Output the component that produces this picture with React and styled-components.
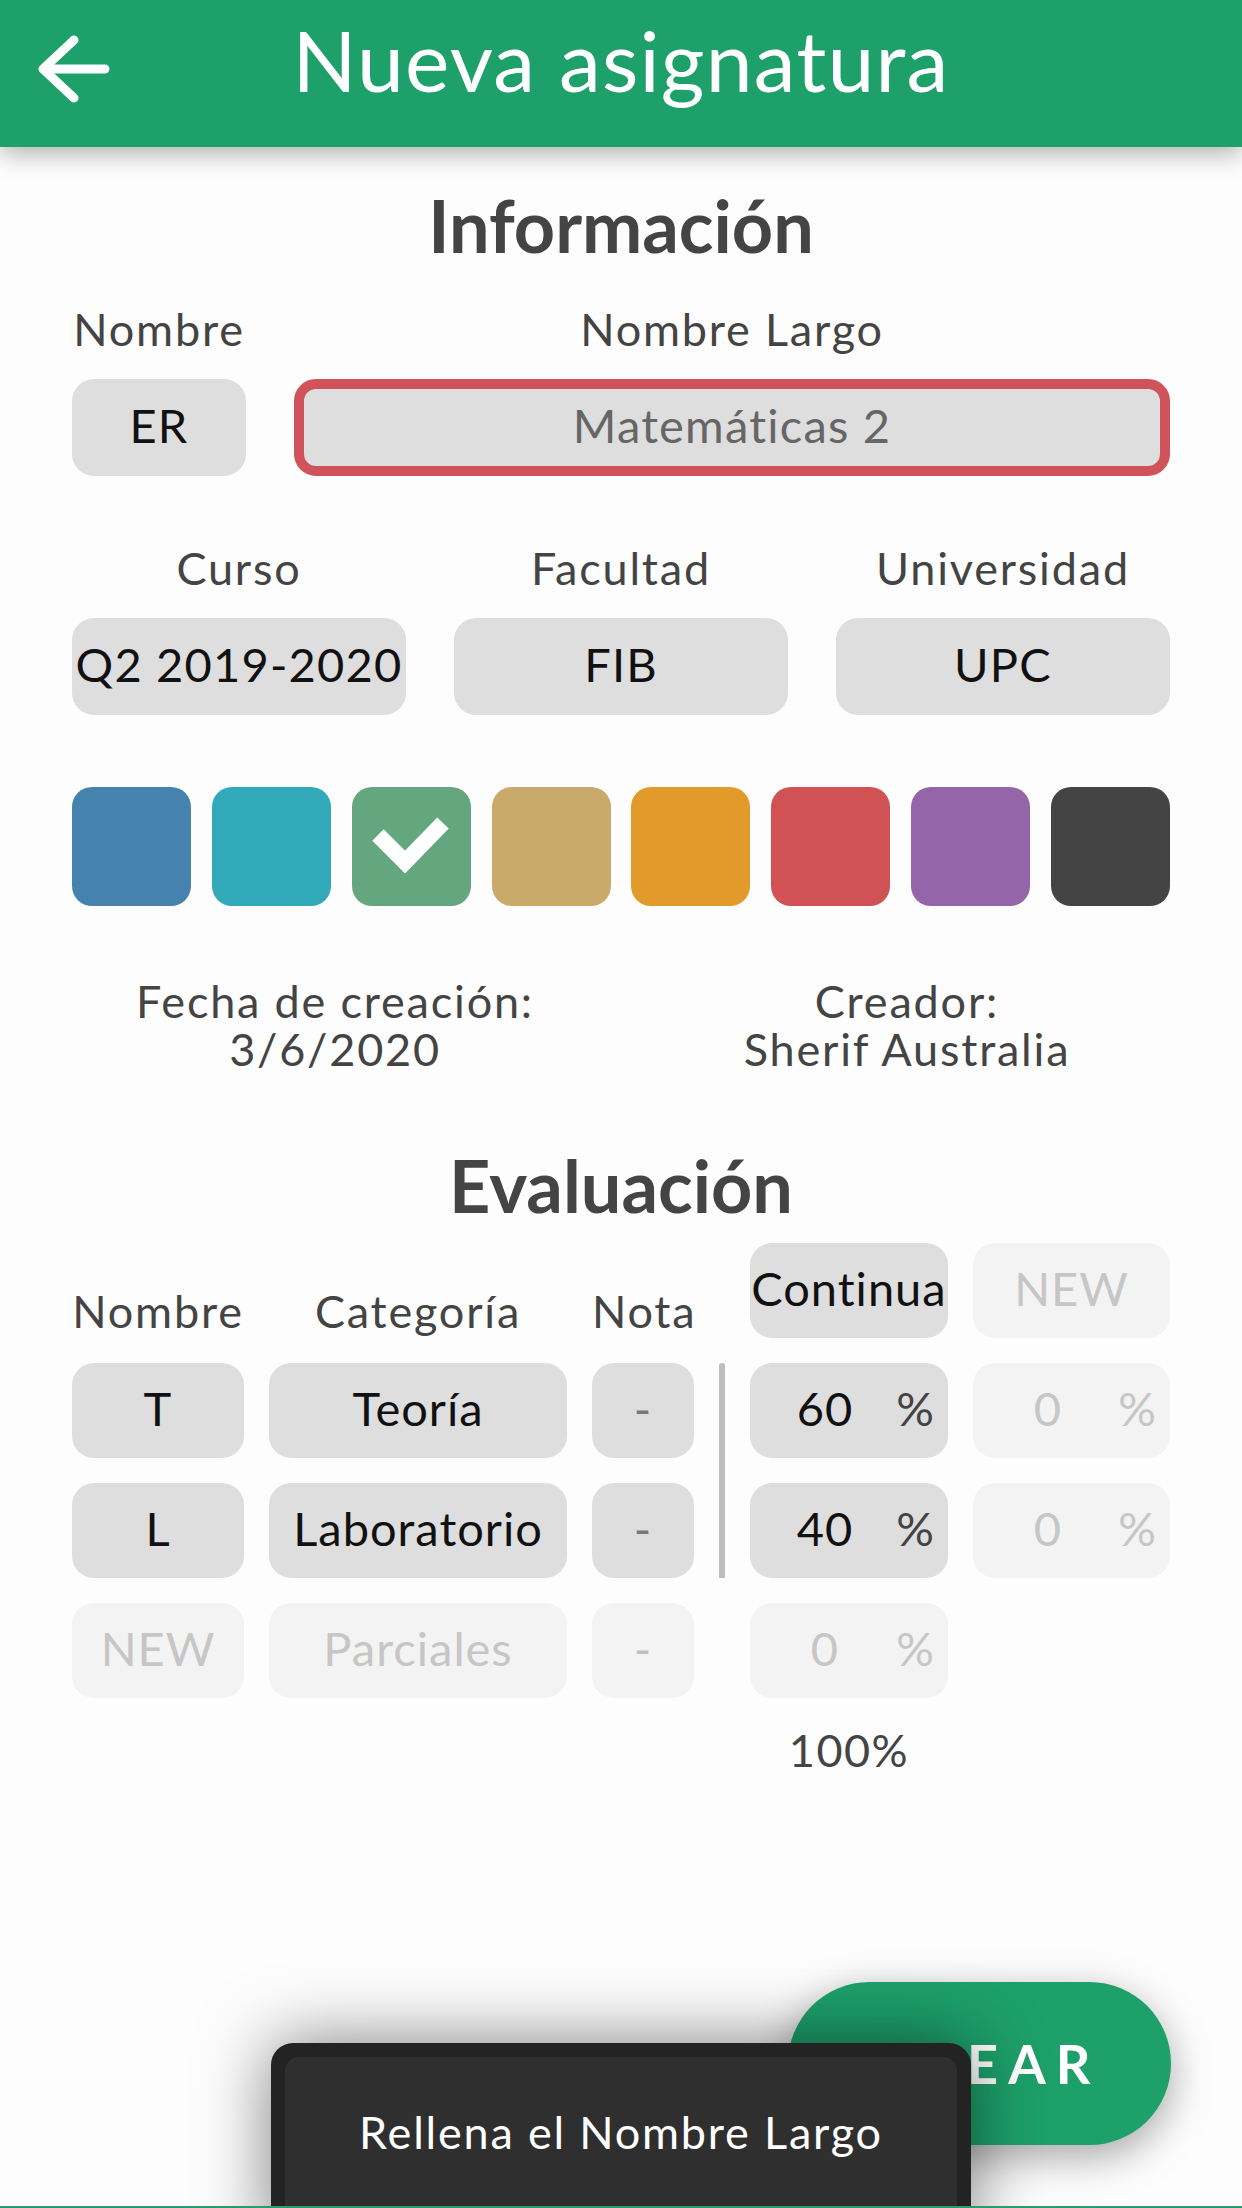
import React from "react";
import styled, { createGlobalStyle, css } from "styled-components";

const GlobalStyle = createGlobalStyle`
  html, body { margin: 0; padding: 0; background: #fdfdfd; }
  body {
    font-family: Lato, "Noto Sans", sans-serif;
    width: 1242px;
    height: 2208px;
    overflow: hidden;
    -webkit-font-smoothing: antialiased;
  }
  * { box-sizing: border-box; }
`;

const Page = styled.div`
  position: relative;
  width: 1242px;
  height: 2208px;
  background: #fdfdfd;
`;

const Header = styled.header`
  position: relative;
  z-index: 2;
  height: 147px;
  background: #1da06a;
  display: grid;
  grid-template-columns: 1fr auto 1fr;
  align-items: start;
  box-shadow: 0 8px 22px rgba(0, 0, 0, 0.28);
`;

const BackButton = styled.div`
  margin: 29px 0 0 34px;
  width: 80px;
  height: 80px;
`;

const HeaderTitle = styled.h1`
  margin: 10px 0 0;
  font-weight: 400;
  font-size: 84px;
  line-height: 100px;
  letter-spacing: 1.2px;
  color: #fff;
  white-space: nowrap;
`;

const Main = styled.main`
  padding: 0 72px;
`;

const SectionTitle = styled.h2`
  margin: ${(p) => p.$mt}px 0 0;
  font-size: 72px;
  line-height: 86px;
  font-weight: 700;
  color: #444;
  text-align: center;
`;

const FieldRow = styled.div`
  margin-top: ${(p) => p.$mt}px;
  display: grid;
  grid-template-columns: ${(p) => p.$cols};
  column-gap: 48px;
`;

const Field = styled.div`
  display: flex;
  flex-direction: column;
`;

const Label = styled.div`
  font-size: 45px;
  line-height: 54px;
  letter-spacing: 1.8px;
  color: #444;
  text-align: center;
  white-space: nowrap;
  margin-bottom: 23px;
`;

const Box = styled.div`
  height: 97px;
  border-radius: 22px;
  background: #dedede;
  display: flex;
  align-items: center;
  justify-content: center;
  padding-bottom: 5px;
  font-size: 47px;
  letter-spacing: 1.2px;
  color: #111;
  white-space: nowrap;
  ${(p) =>
    p.$error &&
    css`
      border: 10px solid #d0525a;
      color: #666;
    `}
`;

const Swatches = styled.div`
  margin-top: 72px;
  display: flex;
  justify-content: space-between;
`;

const Swatch = styled.div`
  width: 119px;
  height: 119px;
  border-radius: 20px;
  background: ${(p) => p.$color};
  display: flex;
  align-items: center;
  justify-content: center;
`;

const Meta = styled.div`
  margin: 71px -23px 0;
  display: grid;
  grid-template-columns: 1fr 1fr;
`;

const MetaItem = styled.div`
  display: flex;
  flex-direction: column;
  align-items: center;
  font-size: 45px;
  letter-spacing: 1.8px;
  color: #444;
`;

const MetaLine = styled.div`
  height: 48px;
  line-height: 48px;
  white-space: nowrap;
`;

const Table = styled.div`
  margin-top: 15px;
  display: grid;
  grid-template-columns: 172px 298px 102px 6px 198px 1fr;
  grid-template-rows: 95px 95px 95px 95px 54px;
  column-gap: 25px;
  row-gap: 25px;
`;

const ColHead = styled.div`
  align-self: end;
  font-size: 45px;
  line-height: 54px;
  letter-spacing: 1.8px;
  color: #444;
  text-align: center;
  white-space: nowrap;
`;

const Cell = styled.div`
  border-radius: 22px;
  background: ${(p) => (p.$faded ? "#f3f3f3" : "#dedede")};
  color: ${(p) => (p.$faded ? "#c6c6c6" : "#111")};
  display: flex;
  align-items: center;
  justify-content: center;
  padding-bottom: 5px;
  font-size: 47px;
  letter-spacing: 1px;
  white-space: nowrap;
  grid-column: ${(p) => p.$col};
`;

const Dash = styled(Cell)`
  color: ${(p) => (p.$faded ? "#c0c0c0" : "#777")};
`;

const Divider = styled.div`
  grid-column: 4;
  grid-row: 2 / span 2;
  width: 6px;
  border-radius: 3px 3px 0 0;
  background: #bdbdbd;
`;

const PctCell = styled(Cell)`
  justify-content: flex-start;
  padding: 0 13px 5px 14px;
`;

const PctNum = styled.span`
  width: 122px;
  text-align: center;
`;

const PctUnit = styled.span`
  flex: 1;
  text-align: right;
  color: ${(p) => (p.$faded ? "#c6c6c6" : "#444")};
`;

const Total = styled.div`
  grid-column: 5;
  font-size: 45px;
  line-height: 54px;
  letter-spacing: 1.5px;
  color: #444;
  text-align: center;
`;

const CreateButton = styled.button`
  position: fixed;
  right: 71px;
  bottom: 63px;
  width: 383px;
  height: 163px;
  border: none;
  border-radius: 82px;
  background: #1da06a;
  color: #fff;
  font-family: Lato, "Noto Sans", sans-serif;
  font-weight: 700;
  font-size: 54px;
  letter-spacing: 10px;
  padding: 0 0 0 18px;
  box-shadow: 0 12px 40px rgba(0, 0, 0, 0.35);
  z-index: 3;
`;

const Toast = styled.div`
  position: fixed;
  left: 271px;
  top: 2043px;
  width: 700px;
  height: 210px;
  border-radius: 22px;
  background: #232323;
  padding: 14px 14px 0;
  box-shadow: 0 0 70px rgba(0, 0, 0, 0.5);
  z-index: 4;
`;

const ToastInner = styled.div`
  height: 100%;
  border-radius: 14px 14px 0 0;
  background: #2f2f2f;
  color: #fff;
  font-size: 45px;
  line-height: 54px;
  letter-spacing: 1.8px;
  text-align: center;
  padding-top: 48px;
`;

const BottomLine = styled.div`
  position: fixed;
  left: 0;
  right: 0;
  bottom: 0;
  height: 2px;
  background: #2e9a6b;
  z-index: 5;
`;

const colors = [
  "#4682ae",
  "#32a9b8",
  "#64a77f",
  "#c9aa6a",
  "#e29a2a",
  "#d05255",
  "#9465a8",
  "#444444",
];

const ArrowIcon = () => (
  <svg width="80" height="80" viewBox="0 0 80 80">
    <path
      d="M9 40 H71 M40 11 L9 40 L40 69"
      fill="none"
      stroke="#fff"
      strokeWidth="9"
      strokeLinecap="round"
      strokeLinejoin="round"
    />
  </svg>
);

const CheckIcon = () => (
  <svg width="119" height="119" viewBox="0 0 119 119">
    <polyline
      points="26,48 53,75 91,36"
      fill="none"
      stroke="#fff"
      strokeWidth="16"
      strokeLinejoin="miter"
      strokeLinecap="butt"
    />
  </svg>
);

const rows = [
  { name: "T", cat: "Teoría", pct: "60", other: "0" },
  { name: "L", cat: "Laboratorio", pct: "40", other: "0" },
];

export default function App() {
  return (
    <Page>
      <GlobalStyle />
      <Header>
        <BackButton>
          <ArrowIcon />
        </BackButton>
        <HeaderTitle>Nueva asignatura</HeaderTitle>
        <div />
      </Header>

      <Main>
        <SectionTitle $mt={35}>Información</SectionTitle>

        <FieldRow $mt={34} $cols="174px 1fr">
          <Field>
            <Label>Nombre</Label>
            <Box>ER</Box>
          </Field>
          <Field>
            <Label>Nombre Largo</Label>
            <Box $error>Matemáticas 2</Box>
          </Field>
        </FieldRow>

        <FieldRow $mt={65} $cols="1fr 1fr 1fr">
          <Field>
            <Label>Curso</Label>
            <Box>Q2 2019-2020</Box>
          </Field>
          <Field>
            <Label>Facultad</Label>
            <Box>FIB</Box>
          </Field>
          <Field>
            <Label>Universidad</Label>
            <Box>UPC</Box>
          </Field>
        </FieldRow>

        <Swatches>
          {colors.map((c, i) => (
            <Swatch key={c} $color={c}>
              {i === 2 && <CheckIcon />}
            </Swatch>
          ))}
        </Swatches>

        <Meta>
          <MetaItem>
            <MetaLine>Fecha de creación:</MetaLine>
            <MetaLine>3/6/2020</MetaLine>
          </MetaItem>
          <MetaItem>
            <MetaLine>Creador:</MetaLine>
            <MetaLine>Sherif Australia</MetaLine>
          </MetaItem>
        </Meta>

        <SectionTitle $mt={69}>Evaluación</SectionTitle>

        <Table>
          <ColHead>Nombre</ColHead>
          <ColHead>Categoría</ColHead>
          <ColHead>Nota</ColHead>
          <Cell $col={5}>Continua</Cell>
          <Cell $col={6} $faded>
            NEW
          </Cell>

          {rows.map((r) => (
            <React.Fragment key={r.name}>
              <Cell $col={1}>{r.name}</Cell>
              <Cell $col={2}>{r.cat}</Cell>
              <Dash $col={3}>-</Dash>
              <PctCell $col={5}>
                <PctNum>{r.pct}</PctNum>
                <PctUnit>%</PctUnit>
              </PctCell>
              <PctCell $col={6} $faded>
                <PctNum>{r.other}</PctNum>
                <PctUnit $faded>%</PctUnit>
              </PctCell>
            </React.Fragment>
          ))}
          <Divider />

          <Cell $col={1} $faded>
            NEW
          </Cell>
          <Cell $col={2} $faded>
            Parciales
          </Cell>
          <Dash $col={3} $faded>
            -
          </Dash>
          <PctCell $col={5} $faded>
            <PctNum>0</PctNum>
            <PctUnit $faded>%</PctUnit>
          </PctCell>

          <Total>100%</Total>
        </Table>
      </Main>

      <CreateButton>CREAR</CreateButton>
      <Toast>
        <ToastInner>Rellena el Nombre Largo</ToastInner>
      </Toast>
      <BottomLine />
    </Page>
  );
}
